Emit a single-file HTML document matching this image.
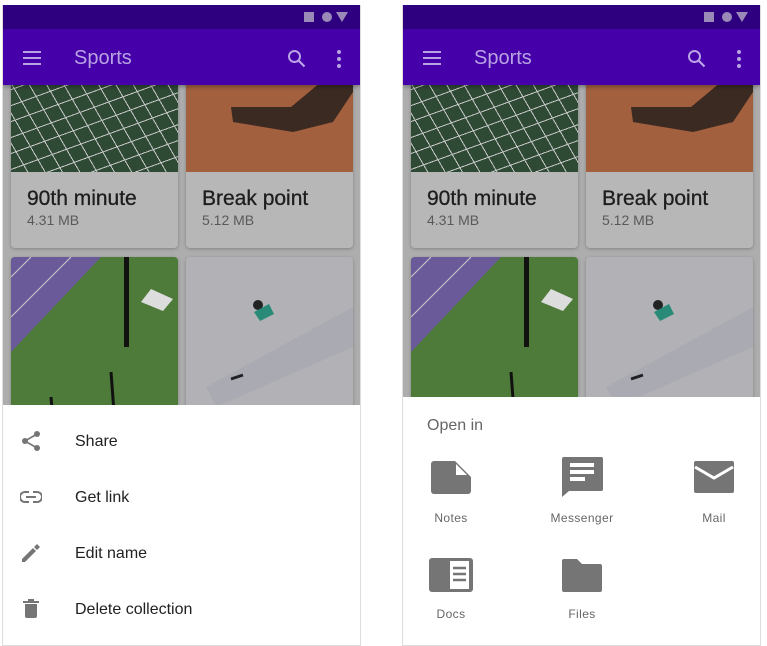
<!DOCTYPE html>
<html><head><style>
*{margin:0;padding:0;box-sizing:border-box}
body{width:767px;height:646px;background:#fff;position:relative;overflow:hidden;font-family:"Liberation Sans",Roboto,sans-serif}
.ph{position:absolute;top:5px;width:359px;height:641px;background:#adadad;overflow:hidden;border:1px solid #ddd;border-top:none}
.sb{position:absolute;left:0;top:0;width:100%;height:24px;background:#2e0080}
.ab{position:absolute;left:0;top:24px;width:100%;height:56px;background:#4500a9;box-shadow:0 2px 4px rgba(0,0,0,.3);z-index:2}
.title{position:absolute;left:71px;top:18px;font-size:20px;color:#b9a3e3}
.card{position:absolute;width:167px;border-radius:4px;background:#b7b7b7;box-shadow:0 1px 3px rgba(0,0,0,.25);overflow:hidden}
.img{position:absolute;left:0;top:0;width:100%}
.ct{position:absolute;left:16px;font-size:21px;color:#1d1d1d;-webkit-text-stroke:.3px #1d1d1d}
.cs{position:absolute;left:16px;font-size:14px;color:#5a5a5a}
.sheet{position:absolute;left:0;width:100%;background:#fff;z-index:3}
.it{position:absolute;left:72px;font-size:16px;color:#212121}
.ic{position:absolute;left:17px}
.lbl{position:absolute;font-size:12px;color:#666;letter-spacing:.4px;transform:translateX(-50%)}
</style></head><body>

<!-- LEFT -->
<div class="ph" style="left:2px">
 <div class="sb"><svg style="position:absolute;right:8px;top:6px" width="48" height="12"><rect x="0" y="1" width="10" height="10" fill="#9a8ab8"/><circle cx="23" cy="6" r="5" fill="#9a8ab8"/><path d="M32 1h12l-6 10z" fill="#9a8ab8"/></svg></div>
 <div class="ab">
  <svg style="position:absolute;left:19px;top:21px" width="20" height="16"><path d="M1 2h18M1 8h18M1 14h18" stroke="#b9a3e3" stroke-width="2"/></svg>
  <div class="title">Sports</div>
  <svg style="position:absolute;left:284px;top:20px" width="20" height="20"><circle cx="7.5" cy="7.5" r="5.5" stroke="#b9a3e3" stroke-width="2" fill="none"/><path d="M11.5 11.5l6 6" stroke="#b9a3e3" stroke-width="2.2"/></svg>
  <svg style="position:absolute;left:333px;top:20px" width="6" height="20"><circle cx="3" cy="3" r="2" fill="#b9a3e3"/><circle cx="3" cy="10" r="2" fill="#b9a3e3"/><circle cx="3" cy="17" r="2" fill="#b9a3e3"/></svg>
 </div>
 <div class="card" style="left:8px;top:72px;height:171px">
  <div class="img" style="height:95px;background:repeating-linear-gradient(60deg,transparent 0 14px,#c8c8c8 14px 15px),repeating-linear-gradient(-20deg,transparent 0 14px,#c8c8c8 14px 15px),#2e4a34"></div>
  <div class="ct" style="top:110px">90th minute</div><div class="cs" style="top:135px">4.31 MB</div>
 </div>
 <div class="card" style="left:183px;top:72px;height:171px">
  <div class="img" style="height:95px;background:#a3603f"><svg width="167" height="95"><path d="M45 30l60 0 30-25 32 0 0 10-20 30-40 10-60-10z" fill="#3a2a22"/></svg></div>
  <div class="ct" style="top:110px">Break point</div><div class="cs" style="top:135px">5.12 MB</div>
 </div>
 <div class="card" style="left:8px;top:252px;height:200px;background:#4e7b3a">
  <svg width="167" height="200"><path d="M0 0h90L0 95z" fill="#6a5a9a"/><path d="M60 0L0 60M20 0L0 20" stroke="#ccc" stroke-width="1"/><rect x="113" y="0" width="5" height="90" fill="#111"/><path d="M130 45l10-13 22 10-10 12z" fill="#ddd"/><path d="M40 140l5 60M100 115l3 40" stroke="#111" stroke-width="3"/></svg>
 </div>
 <div class="card" style="left:183px;top:252px;height:200px;background:#b2b2b6">
  <svg width="167" height="200"><path d="M20 130l147-80v40L30 150z" fill="#a9aab2"/><circle cx="72" cy="48" r="5" fill="#222"/><path d="M68 55l15-8 5 10-14 7z" fill="#2a8a78"/><path d="M45 122l12-4" stroke="#222" stroke-width="3"/></svg>
 </div>
 <div class="sheet" style="top:400px;height:241px">
  <svg class="ic" style="top:25px" width="22" height="22"><circle cx="17" cy="4" r="3" fill="#757575"/><circle cx="5" cy="11" r="3" fill="#757575"/><circle cx="17" cy="18" r="3" fill="#757575"/><path d="M17 4L5 11l12 7" stroke="#757575" stroke-width="1.6" fill="none"/></svg>
  <div class="it" style="top:28px">Share</div>
  <svg class="ic" style="top:86px" width="22" height="12"><path d="M9 1H5a5 5 0 0 0 0 10h4M13 1h4a5 5 0 0 1 0 10h-4M6 6h10" stroke="#757575" stroke-width="2" fill="none"/></svg>
  <div class="it" style="top:84px">Get link</div>
  <svg class="ic" style="top:137px" width="22" height="22"><path d="M2 17v3h3L16 9l-3-3zM14 5l3-3 3 3-3 3z" fill="#757575"/></svg>
  <div class="it" style="top:140px">Edit name</div>
  <svg class="ic" style="top:193px" width="22" height="22"><path d="M3 3h16v2H3zM8 1h6v2H8zM5 6h12v12a2 2 0 0 1-2 2H7a2 2 0 0 1-2-2z" fill="#757575"/></svg>
  <div class="it" style="top:196px">Delete collection</div>
 </div>
</div>

<!-- RIGHT -->
<div class="ph" style="left:402px">
 <div class="sb"><svg style="position:absolute;right:8px;top:6px" width="48" height="12"><rect x="0" y="1" width="10" height="10" fill="#9a8ab8"/><circle cx="23" cy="6" r="5" fill="#9a8ab8"/><path d="M32 1h12l-6 10z" fill="#9a8ab8"/></svg></div>
 <div class="ab">
  <svg style="position:absolute;left:19px;top:21px" width="20" height="16"><path d="M1 2h18M1 8h18M1 14h18" stroke="#b9a3e3" stroke-width="2"/></svg>
  <div class="title">Sports</div>
  <svg style="position:absolute;left:284px;top:20px" width="20" height="20"><circle cx="7.5" cy="7.5" r="5.5" stroke="#b9a3e3" stroke-width="2" fill="none"/><path d="M11.5 11.5l6 6" stroke="#b9a3e3" stroke-width="2.2"/></svg>
  <svg style="position:absolute;left:333px;top:20px" width="6" height="20"><circle cx="3" cy="3" r="2" fill="#b9a3e3"/><circle cx="3" cy="10" r="2" fill="#b9a3e3"/><circle cx="3" cy="17" r="2" fill="#b9a3e3"/></svg>
 </div>
 <div class="card" style="left:8px;top:72px;height:171px">
  <div class="img" style="height:95px;background:repeating-linear-gradient(60deg,transparent 0 14px,#c8c8c8 14px 15px),repeating-linear-gradient(-20deg,transparent 0 14px,#c8c8c8 14px 15px),#2e4a34"></div>
  <div class="ct" style="top:110px">90th minute</div><div class="cs" style="top:135px">4.31 MB</div>
 </div>
 <div class="card" style="left:183px;top:72px;height:171px">
  <div class="img" style="height:95px;background:#a3603f"><svg width="167" height="95"><path d="M45 30l60 0 30-25 32 0 0 10-20 30-40 10-60-10z" fill="#3a2a22"/></svg></div>
  <div class="ct" style="top:110px">Break point</div><div class="cs" style="top:135px">5.12 MB</div>
 </div>
 <div class="card" style="left:8px;top:252px;height:200px;background:#4e7b3a">
  <svg width="167" height="200"><path d="M0 0h90L0 95z" fill="#6a5a9a"/><path d="M60 0L0 60M20 0L0 20" stroke="#ccc" stroke-width="1"/><rect x="113" y="0" width="5" height="90" fill="#111"/><path d="M130 45l10-13 22 10-10 12z" fill="#ddd"/><path d="M40 140l5 60M100 115l3 40" stroke="#111" stroke-width="3"/></svg>
 </div>
 <div class="card" style="left:183px;top:252px;height:200px;background:#b2b2b6">
  <svg width="167" height="200"><path d="M20 130l147-80v40L30 150z" fill="#a9aab2"/><circle cx="72" cy="48" r="5" fill="#222"/><path d="M68 55l15-8 5 10-14 7z" fill="#2a8a78"/><path d="M45 122l12-4" stroke="#222" stroke-width="3"/></svg>
 </div>
 <div class="sheet" style="top:392px;height:249px">
  <div style="position:absolute;left:24px;top:20px;font-size:16px;color:#666">Open in</div>
  <svg style="position:absolute;left:28px;top:64px" width="41" height="33"><path d="M3 0h21l16 16v14a3 3 0 0 1-3 3H3a3 3 0 0 1-3-3V3a3 3 0 0 1 3-3z" fill="#757575"/><path d="M25 3v11h11z" fill="#fff"/></svg>
  <div class="lbl" style="left:48px;top:114px">Notes</div>
  <svg style="position:absolute;left:159px;top:60px" width="41" height="41"><path d="M2 0h37a2 2 0 0 1 2 2v30a2 2 0 0 1-2 2H7L0 40V2a2 2 0 0 1 2-2z" fill="#757575"/><path d="M8 6h24v4H8zM8 13h24v4H8zM8 20h15v4H8z" fill="#fff"/></svg>
  <div class="lbl" style="left:179px;top:114px">Messenger</div>
  <svg style="position:absolute;left:291px;top:64px" width="40" height="32"><rect width="40" height="32" rx="2" fill="#757575"/><path d="M1 6l19 11 19-11" stroke="#fff" stroke-width="3" fill="none"/></svg>
  <div class="lbl" style="left:311px;top:114px">Mail</div>
  <svg style="position:absolute;left:26px;top:161px" width="44" height="34"><rect width="44" height="34" rx="3" fill="#757575"/><rect x="21" y="3" width="19" height="28" fill="#fff"/><path d="M24 10h13M24 16h13M24 22h13" stroke="#757575" stroke-width="2.5"/></svg>
  <div class="lbl" style="left:48px;top:210px">Docs</div>
  <svg style="position:absolute;left:159px;top:162px" width="40" height="33"><path d="M2 0h13l5 5h18a2 2 0 0 1 2 2v24a2 2 0 0 1-2 2H2a2 2 0 0 1-2-2V2a2 2 0 0 1 2-2z" fill="#757575"/></svg>
  <div class="lbl" style="left:179px;top:210px">Files</div>
 </div>
</div>
</body></html>
